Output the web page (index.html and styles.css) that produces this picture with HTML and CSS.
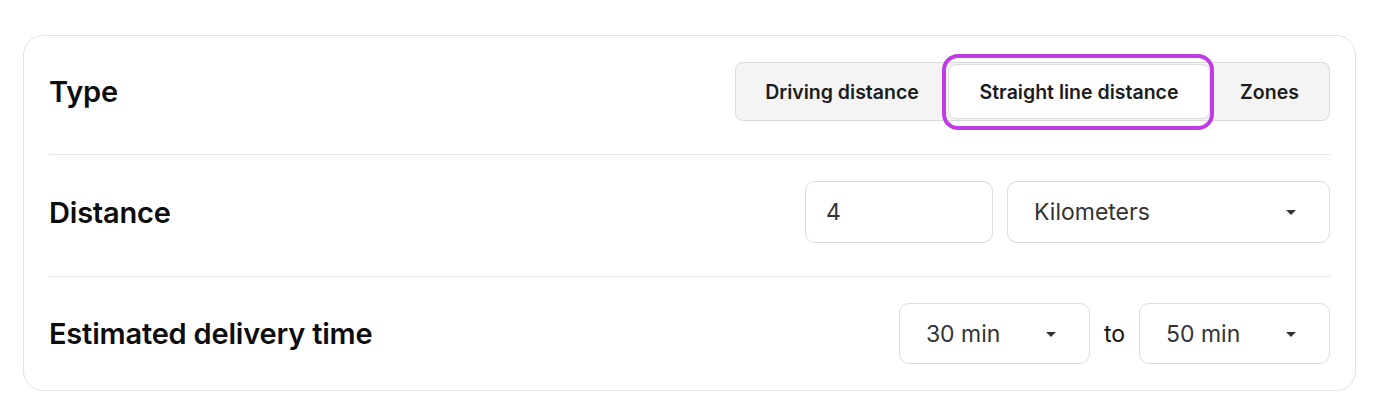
FILE: index.html
```html
<!DOCTYPE html>
<html>
<head>
<meta charset="utf-8">
<link rel="stylesheet" href="styles.css">
</head>
<body>
<div class="card">
  <div class="row">
    <div class="label">Type</div>
    <div class="segmented">
      <div class="seg">Driving distance</div>
      <div class="seg seg-active">Straight line distance</div>
      <div class="seg">Zones</div>
    </div>
  </div>
  <div class="row">
    <div class="label">Distance</div>
    <div class="controls">
      <div class="field field-num">4</div>
      <div class="field field-select field-unit">Kilometers<span class="caret"></span></div>
    </div>
  </div>
  <div class="row">
    <div class="label">Estimated delivery time</div>
    <div class="controls">
      <div class="field field-select field-time">30 min<span class="caret"></span></div>
      <span class="to">to</span>
      <div class="field field-select field-time">50 min<span class="caret"></span></div>
    </div>
  </div>
</div>
</body>
</html>
```

FILE: styles.css
```css
* { box-sizing: border-box; }
html, body { margin: 0; padding: 0; background: #fff; }
body {
  font-family: Inter, "Noto Sans", sans-serif;
  color: #111;
  padding: 35px 21px 0 23px;
}
.card {
  border: 1px solid #e2e2e2;
  border-radius: 20px;
  padding: 0 25px;
  width: 1333px;
}
.row {
  display: flex;
  align-items: center;
  justify-content: space-between;
  padding: 26px 0 33px;
  border-bottom: 1px solid #e8e8e8;
}
.row:last-child {
  border-bottom: none;
  padding-bottom: 26px;
}
.label {
  font-size: 29px;
  font-weight: 600;
  color: #0d0d0d;
  letter-spacing: -0.2px;
}
.segmented {
  display: flex;
  height: 59px;
  background: #f4f4f4;
  border: 1px solid #dadada;
  border-radius: 8px;
  padding: 1px 0;
}
.seg {
  display: flex;
  align-items: center;
  justify-content: center;
  font-size: 19.5px;
  font-weight: 600;
  color: #1c1c1c;
  position: relative;
  white-space: nowrap;
}
.seg:first-child { width: 212px; }
.seg-active { width: 262px; background: #fff; border: 1px solid #dcdcdc; border-radius: 8px; }
.seg:last-child { width: 119px; }
.seg-active::after {
  content: "";
  position: absolute;
  top: -11px;
  bottom: -12px;
  left: -7px;
  right: -5px;
  border: 4px solid #c13ae8;
  border-radius: 16px;
}
.controls {
  display: flex;
  align-items: center;
  gap: 14px;
}
.field {
  height: 62px;
  border: 1px solid #dcdcdc;
  border-radius: 10px;
  display: flex;
  align-items: center;
  font-size: 23px;
  color: #333;
  position: relative;
  background: #fff;
}
.field-num { width: 188px; padding-left: 20px; }
.field-unit { width: 323px; padding-left: 26px; }
.field-time { width: 191px; height: 61px; padding-left: 26px; }
.caret {
  position: absolute;
  right: 33px;
  top: 50%;
  margin-top: -2px;
  width: 0;
  height: 0;
  border-left: 5px solid transparent;
  border-right: 5px solid transparent;
  border-top: 5px solid #333;
}
.to {
  font-size: 23px;
  color: #111;
}
```
